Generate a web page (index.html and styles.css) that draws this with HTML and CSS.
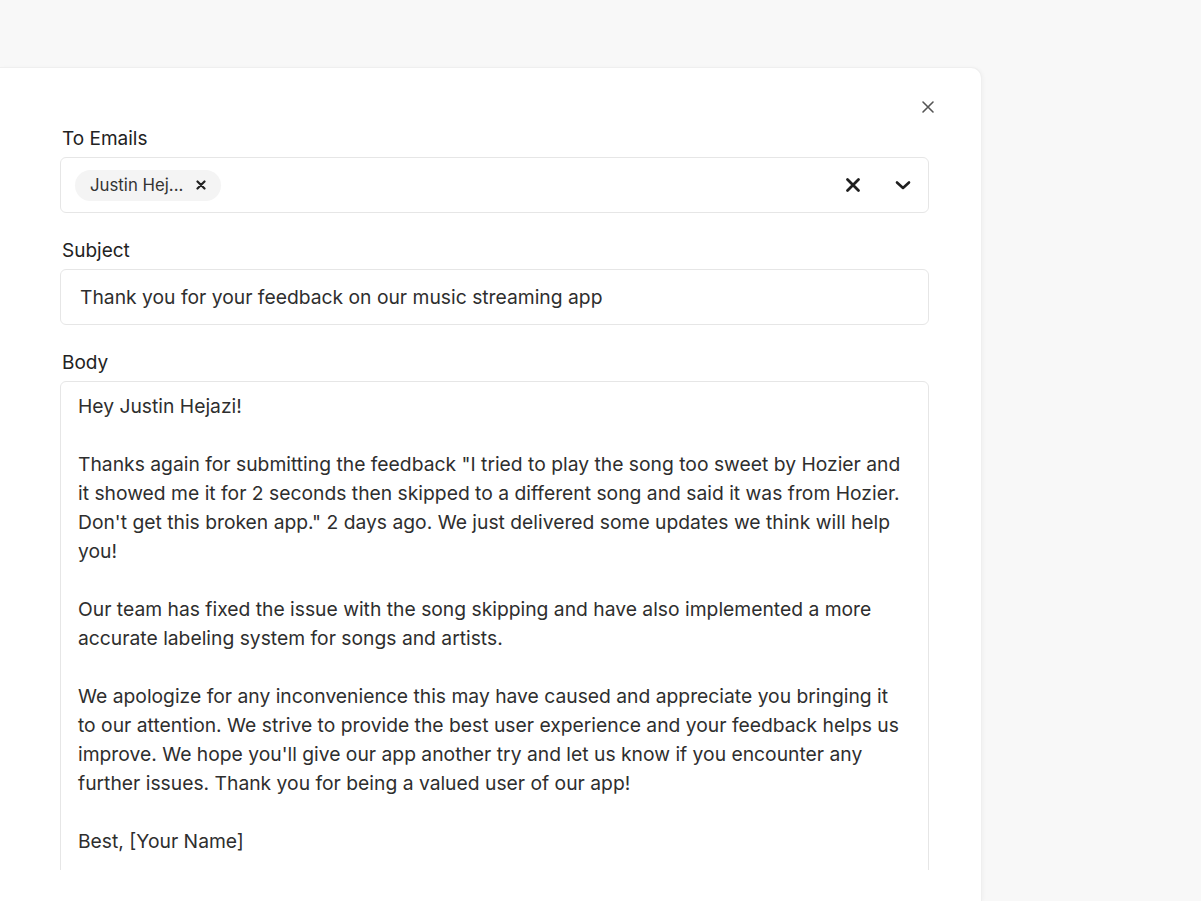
FILE: index.html
```html
<!DOCTYPE html>
<html>
<head>
<meta charset="utf-8">
<link rel="stylesheet" href="styles.css">
</head>
<body>
<div class="page">
  <div class="card">
    <div class="header">
      <button class="close" aria-label="Close">
        <svg width="14" height="14" viewBox="0 0 14 14"><path d="M2 2 L12 12 M12 2 L2 12" stroke="#555" stroke-width="1.6" stroke-linecap="round" fill="none"/></svg>
      </button>
    </div>
    <div class="scroll">
      <div class="field">
        <label class="label">To Emails</label>
        <div class="select">
          <div class="chips">
            <span class="chip">Justin Hej...
              <svg class="chip-x" width="10" height="10" viewBox="0 0 10 10"><path d="M1.5 1.5 L8.5 8.5 M8.5 1.5 L1.5 8.5" stroke="#222" stroke-width="2.2" stroke-linecap="round" fill="none"/></svg>
            </span>
          </div>
          <div class="actions">
            <svg width="16" height="16" viewBox="0 0 16 16"><path d="M2.5 2.5 L13.5 13.5 M13.5 2.5 L2.5 13.5" stroke="#1f1f1f" stroke-width="2.8" stroke-linecap="round" fill="none"/></svg>
            <svg width="18" height="18" viewBox="0 0 18 18"><path d="M3 6.5 L9 12 L15 6.5" stroke="#1f1f1f" stroke-width="2.6" stroke-linecap="round" stroke-linejoin="round" fill="none"/></svg>
          </div>
        </div>
      </div>
      <div class="field">
        <label class="label">Subject</label>
        <div class="input">Thank you for your feedback on our music streaming app</div>
      </div>
      <div class="field">
        <label class="label">Body</label>
        <div class="textarea">Hey Justin Hejazi!

Thanks again for submitting the feedback "I tried to play the song too sweet by Hozier and it showed me it for 2 seconds then skipped to a different song and said it was from Hozier. Don't get this broken app." 2 days ago. We just delivered some updates we think will help you!

Our team has fixed the issue with the song skipping and have also implemented a more accurate labeling system for songs and artists.

We apologize for any inconvenience this may have caused and appreciate you bringing it to our attention. We strive to provide the best user experience and your feedback helps us improve. We hope you'll give our app another try and let us know if you encounter any further issues. Thank you for being a valued user of our app!

Best, [Your Name]</div>
      </div>
    </div>
  </div>
</div>
</body>
</html>
```
FILE: styles.css
```css
* { box-sizing: border-box; }
html, body { margin: 0; padding: 0; }
body {
  background: #f8f8f8;
  font-family: Inter, "Noto Sans", sans-serif;
  color: #2e2e2e;
  width: 1201px;
  height: 901px;
  overflow: hidden;
}
.page {
  padding-top: 68px;
  height: 901px;
}
.card {
  width: 981px;
  height: 833px;
  background: #fff;
  border-radius: 0 10px 0 0;
  box-shadow: 0 0 0 1px #efefef, 2px 0 4px rgba(0,0,0,0.04);
  padding: 0 52px 0 60px;
}
.header {
  height: 56px;
  display: flex;
  justify-content: flex-end;
  align-items: flex-end;
}
.close {
  border: 0;
  background: none;
  padding: 0;
  width: 14px;
  height: 14px;
  margin-right: -6px;
  margin-bottom: 10px;
  display: flex;
}
.scroll {
  height: 746px;
  overflow: hidden;
}
.field {
  display: flex;
  flex-direction: column;
  gap: 4px;
  margin-bottom: 23px;
}
.label {
  font-size: 19px;
  line-height: 28px;
  padding-top: 1px;
  color: #222;
  padding-left: 2px;
}
.select {
  height: 56px;
  border: 1px solid #e6e6e6;
  border-radius: 6px;
  display: flex;
  align-items: center;
  justify-content: space-between;
  padding: 0 16px 0 14px;
}
.chip {
  display: inline-flex;
  align-items: center;
  gap: 13px;
  background: #f4f4f4;
  border-radius: 16px;
  height: 31px;
  padding: 0 15px;
  font-size: 16.8px;
  color: #333;
}
.actions {
  display: flex;
  align-items: center;
  gap: 33px;
}
.input {
  height: 56px;
  border: 1px solid #e6e6e6;
  border-radius: 6px;
  display: flex;
  align-items: center;
  padding: 0 19px;
  font-size: 19.3px;
  color: #2e2e2e;
}
.textarea {
  border: 1px solid #e6e6e6;
  border-radius: 6px;
  padding: 10px 17px 80px 17px;
  font-size: 19.3px;
  line-height: 29px;
  white-space: pre-wrap;
  color: #2e2e2e;
}
```
